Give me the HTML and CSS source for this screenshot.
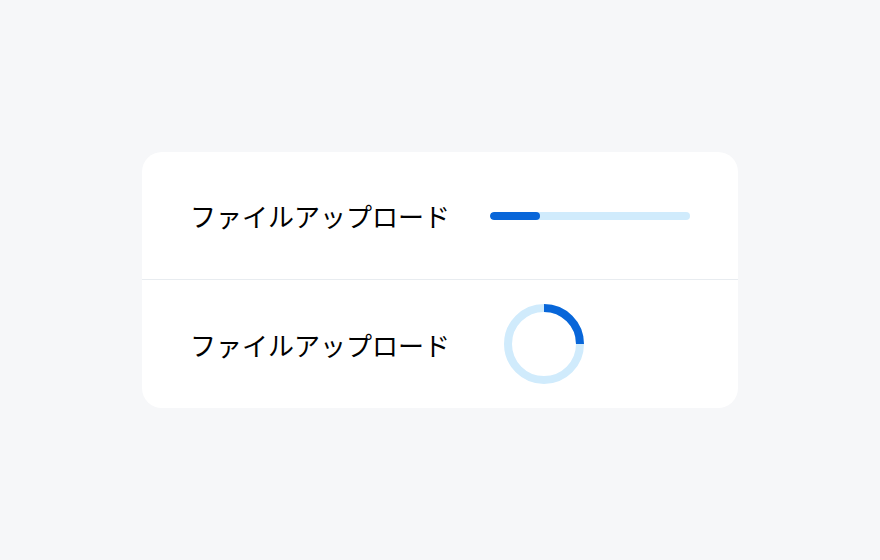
FILE: index.html
```html
<!DOCTYPE html>
<html lang="ja">
<head>
  <meta charset="UTF-8" />
  <meta name="viewport" content="width=device-width, initial-scale=1.0"/>
  <title>ファイルアップロード</title>
  <link rel="stylesheet" href="styles.css">
</head>
<body>
  <div class="page">
    <div class="card">
      <div class="row">
        <span class="label">ファイルアップロード</span>
        <div class="bar">
          <div class="bar-fill" style="width: 25%"></div>
        </div>
      </div>
      <div class="row">
        <span class="label">ファイルアップロード</span>
        <svg class="ring" width="80" height="80" viewBox="0 0 80 80">
          <circle cx="40" cy="40" r="36" fill="none" stroke="#d0ebfc" stroke-width="8"/>
          <circle cx="40" cy="40" r="36" fill="none" stroke="#0866d9" stroke-width="8"
            stroke-dasharray="56.55 226.19" transform="rotate(-90 40 40)"/>
        </svg>
      </div>
    </div>
  </div>
</body>
</html>
```

FILE: styles.css
```css
* {
  margin: 0;
  padding: 0;
  box-sizing: border-box;
}

html, body {
  height: 100%;
  font-family: "Noto Sans CJK JP", "Noto Sans", sans-serif;
  background-color: #f6f7f9;
}

.page {
  display: flex;
  justify-content: center;
  align-items: center;
  height: 100%;
}

.card {
  width: 596px;
  background-color: #fff;
  border-radius: 20px;
}

.row {
  display: flex;
  align-items: center;
  height: 127px;
  padding: 0 48px;
}

.row + .row {
  height: 129px;
  border-top: 1px solid #e8ecf0;
}

.label {
  flex: 0 0 300px;
  font-size: 26px;
  color: #000;
  white-space: nowrap;
}

.bar {
  width: 200px;
  height: 8px;
  border-radius: 4px;
  background-color: #d0ebfc;
  overflow: hidden;
}

.bar-fill {
  height: 100%;
  border-radius: 4px;
  background-color: #0866d9;
}

.ring {
  margin-left: 14px;
}
```
